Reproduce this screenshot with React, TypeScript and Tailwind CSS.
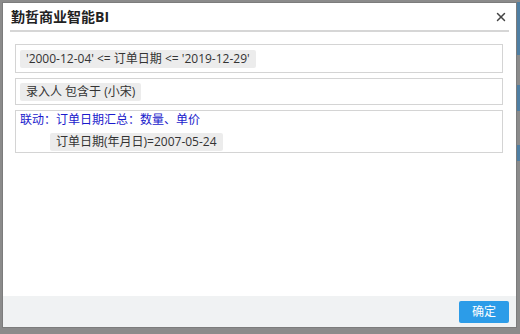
import { X } from 'lucide-react';

const font = { fontFamily: '"Open Sans", "Noto Sans CJK SC", sans-serif' };

function Tag({ children }: { children: React.ReactNode }) {
  return (
    <span className="inline-block h-[18px] rounded-[2px] bg-[#ececec] px-[6px] text-[12px] leading-[18px] text-[#333]">
      {children}
    </span>
  );
}

export default function App() {
  return (
    <div className="flex h-[334px] w-[520px] bg-[#8b8b8b] pl-[2px] pt-[2px]" style={font}>
      <div className="flex h-[326px] w-[515px] flex-col border border-[#7c7c7c] bg-white">
        <div className="mx-[7px] flex h-[29px] items-center justify-between border-b-2 border-[#d6d6d6] pl-[1px]">
          <span className="text-[14px] font-bold text-[#222]">勤哲商业智能BI</span>
          <X className="mr-[1px] h-[14px] w-[14px] text-[#444]" strokeWidth={2.5} />
        </div>

        <div className="flex flex-1 flex-col gap-[5px] pl-[12px] pr-[13px] pt-[12px]">
          <div className="flex h-[29px] items-center border border-[#d4d4d4] px-[4px]">
            <Tag>'2000-12-04' &lt;= 订单日期 &lt;= '2019-12-29'</Tag>
          </div>
          <div className="flex h-[27px] items-center border border-[#d4d4d4] px-[4px]">
            <Tag>录入人 包含于 (小宋)</Tag>
          </div>
          <div className="flex h-[43px] flex-col justify-center border border-[#d4d4d4] px-[4px]">
            <span className="text-[12px] leading-[16px] text-[#1a1acc]">联动：订单日期汇总：数量、单价</span>
            <div className="pl-[30px]">
              <Tag>订单日期(年月日)=2007-05-24</Tag>
            </div>
          </div>
        </div>

        <div className="flex h-[31px] items-center justify-end bg-[#f0f2f3] pr-[7px]">
          <button
            type="button"
            className="h-[22px] w-[50px] rounded-[2px] bg-[#2c9ce8] text-[12px] text-white"
          >
            确定
          </button>
        </div>
      </div>

      <div className="flex flex-1 flex-col">
        <div className="h-[53px] bg-[#4f7fa3]" />
        <div className="h-[30px]" />
        <div className="h-[26px] bg-[#4f7fa3]" />
        <div className="h-[34px]" />
        <div className="h-[16px] bg-[#4f7fa3]" />
      </div>
    </div>
  );
}
